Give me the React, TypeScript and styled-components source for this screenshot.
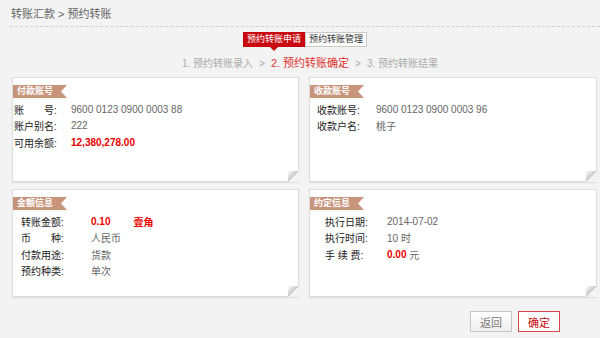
import styled, { createGlobalStyle } from "styled-components"

const GlobalStyle = createGlobalStyle`
    body {
        margin: 0;
        background: #f3f3f3;
        font-family: "Liberation Sans", "Noto Sans CJK SC", sans-serif;
        font-size: 11px;
        color: #333;
    }
`

type Row = { label: string; value: string; red?: boolean; extra?: string; unit?: string }

type CardData = {
    title: string
    padLeft: number
    labelWidth: number
    rows: Row[]
}

const cards: CardData[] = [
    {
        title: "付款账号",
        padLeft: 1,
        labelWidth: 57,
        rows: [
            { label: "账　　号:", value: "9600 0123 0900 0003 88" },
            { label: "账户别名:", value: "222" },
            { label: "可用余额:", value: "12,380,278.00", red: true },
        ],
    },
    {
        title: "收款账号",
        padLeft: 7,
        labelWidth: 59,
        rows: [
            { label: "收款账号:", value: "9600 0123 0900 0003 96" },
            { label: "收款户名:", value: "桃子" },
        ],
    },
    {
        title: "金额信息",
        padLeft: 8,
        labelWidth: 70,
        rows: [
            { label: "转账金额:", value: "0.10", red: true, extra: "壹角" },
            { label: "币　　种:", value: "人民币" },
            { label: "付款用途:", value: "货款" },
            { label: "预约种类:", value: "单次" },
        ],
    },
    {
        title: "约定信息",
        padLeft: 15,
        labelWidth: 62,
        rows: [
            { label: "执行日期:", value: "2014-07-02" },
            { label: "执行时间:", value: "10 时" },
            { label: "手 续 费:", value: "0.00", red: true, unit: " 元" },
        ],
    },
]

export default function App() {
    return (
        <Page>
            <GlobalStyle />
            <Breadcrumb>转账汇款 &gt; 预约转账</Breadcrumb>
            <Tabs>
                <Tab $active>预约转账申请</Tab>
                <Tab>预约转账管理</Tab>
            </Tabs>
            <Steps>
                <Step>1. 预约转账录入</Step>
                <Sep>&gt;</Sep>
                <Step $active>2. 预约转账确定</Step>
                <Sep>&gt;</Sep>
                <Step>3. 预约转账结果</Step>
            </Steps>
            <Grid>
                {cards.map((c) => (
                    <Card key={c.title}>
                        <Ribbon>{c.title}</Ribbon>
                        <Rows $pad={c.padLeft}>
                            {c.rows.map((r) => (
                                <Line key={r.label}>
                                    <Label $w={c.labelWidth}>{r.label}</Label>
                                    <Value $red={r.red}>{r.value}</Value>
                                    {r.unit && <Value>{r.unit}</Value>}
                                    {r.extra && <Extra>{r.extra}</Extra>}
                                </Line>
                            ))}
                        </Rows>
                    </Card>
                ))}
            </Grid>
            <Actions>
                <Button>返回</Button>
                <Button $primary>确定</Button>
            </Actions>
        </Page>
    )
}

const Page = styled.div`
    width: 600px;
    height: 338px;
    overflow: hidden;
    display: flex;
    flex-direction: column;
`

const Breadcrumb = styled.div`
    height: 26px;
    line-height: 29px;
    margin-left: 10px;
    padding-left: 1px;
    color: #666;
    font-size: 11px;
    border-bottom: 1px dashed #d0d0d0;
`

const Tabs = styled.div`
    display: flex;
    justify-content: center;
    margin-top: 5px;
    padding-left: 10px;
`

const Tab = styled.div<{ $active?: boolean }>`
    position: relative;
    height: 13px;
    line-height: 13px;
    padding: 0 3px;
    font-size: 9px;
    color: ${(p) => (p.$active ? "#fff" : "#333")};
    background: ${(p) => (p.$active ? "#c8090f" : "#fff")};
    border: 1px solid ${(p) => (p.$active ? "#c8090f" : "#c9c9c9")};
    &::after {
        content: "";
        display: ${(p) => (p.$active ? "block" : "none")};
        position: absolute;
        left: 50%;
        bottom: -5px;
        margin-left: -4px;
        border-left: 4px solid transparent;
        border-right: 4px solid transparent;
        border-top: 4px solid #c8090f;
    }
`

const Steps = styled.div`
    display: flex;
    justify-content: center;
    align-items: baseline;
    gap: 6px;
    margin-top: 9px;
    padding-left: 20px;
    font-size: 10px;
    line-height: 14px;
    color: #aaa;
`

const Step = styled.span<{ $active?: boolean }>`
    color: ${(p) => (p.$active ? "#e0322f" : "#aaa")};
    font-size: ${(p) => (p.$active ? "11px" : "10px")};
`

const Sep = styled.span`
    color: #aaa;
`

const Grid = styled.div`
    display: grid;
    grid-template-columns: 287px 288px;
    grid-template-rows: 105px 108px;
    column-gap: 10px;
    row-gap: 7px;
    margin: 6px 0 0 12px;
`

const Card = styled.div`
    position: relative;
    background: #fff;
    border: 1px solid #dedede;
    box-shadow: 0 1px 1px rgba(0, 0, 0, 0.08);
    padding-top: 7px;
    &::after {
        content: "";
        position: absolute;
        right: -1px;
        bottom: -1px;
        width: 11px;
        height: 11px;
        background: linear-gradient(135deg, #fff 0%, #c8c8c8 48%, #f3f3f3 52%, #f3f3f3 100%);
    }
`

const Ribbon = styled.div`
    width: 50px;
    height: 13px;
    line-height: 13px;
    padding-left: 4px;
    font-size: 9px;
    font-weight: bold;
    color: #fff;
    background: #c8957c;
    clip-path: polygon(0 0, 100% 0, calc(100% - 6px) 50%, 100% 100%, 0 100%);
`

const Rows = styled.div<{ $pad: number }>`
    display: flex;
    flex-direction: column;
    margin-top: 3px;
    padding-left: ${(p) => p.$pad}px;
`

const Line = styled.div`
    display: flex;
    align-items: center;
    height: 16.5px;
    font-size: 10px;
`

const Label = styled.span<{ $w: number }>`
    width: ${(p) => p.$w}px;
    color: #222;
    white-space: pre;
`

const Value = styled.span<{ $red?: boolean }>`
    color: ${(p) => (p.$red ? "#e00" : "#666")};
    font-weight: ${(p) => (p.$red ? "bold" : "normal")};
    white-space: pre;
`

const Extra = styled.span`
    margin-left: 23px;
    color: #e00;
    font-weight: bold;
`

const Actions = styled.div`
    display: flex;
    justify-content: flex-end;
    gap: 6px;
    margin-top: 14px;
    padding-right: 40px;
`

const Button = styled.button<{ $primary?: boolean }>`
    width: 42px;
    height: 21px;
    padding: 0;
    font-family: inherit;
    font-size: 11px;
    cursor: pointer;
    color: ${(p) => (p.$primary ? "#c8090f" : "#777")};
    background: ${(p) => (p.$primary ? "#fff" : "linear-gradient(#fff, #eee)")};
    border: 1px solid ${(p) => (p.$primary ? "#d9434a" : "#c6c6c6")};
`
